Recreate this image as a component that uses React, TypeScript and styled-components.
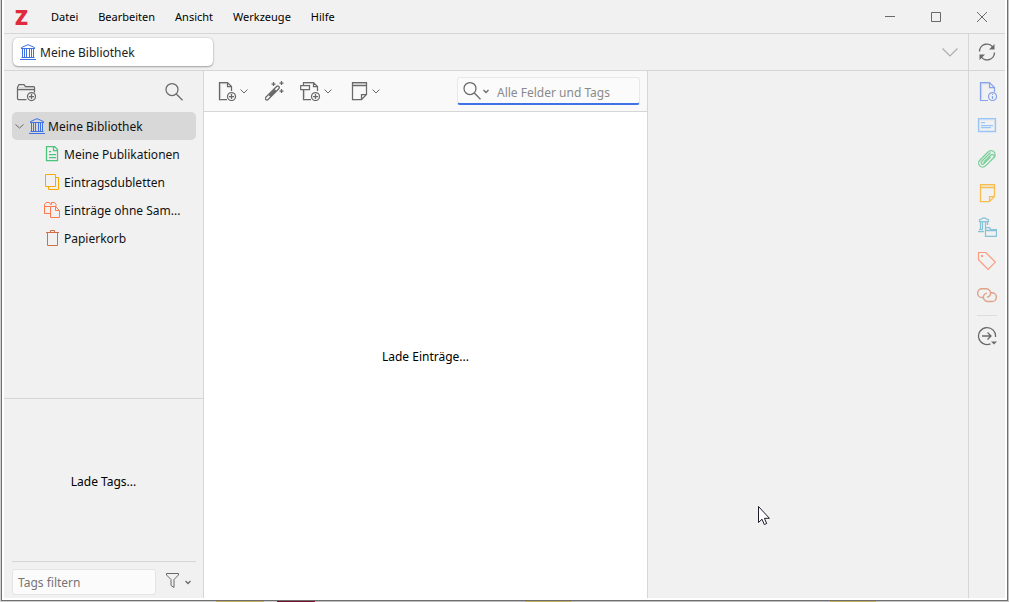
import React from "react";
import styled, { createGlobalStyle } from "styled-components";

const color = {
  chrome: "#f1f1f1",
  toolbar: "#f9f9f9",
  line: "#d6d6d6",
  icon: "#696969",
  accent: "#4072e5",
};

const GlobalStyle = createGlobalStyle`
  *, *::before, *::after { box-sizing: border-box; }
  body {
    margin: 0;
    font-family: "Noto Sans", "Open Sans", sans-serif;
    font-size: 12px;
    line-height: 16px;
    color: #111;
  }
  button, input { font: inherit; color: inherit; }
  svg { display: block; flex: none; }
`;

const Desktop = styled.div`
  min-height: 100vh;
  display: flex;
  padding: 0 1px 1px;
  background: linear-gradient(90deg,
    #cfcfcf 0 216px, #c5ad5e 216px 264px, #cfcfcf 264px 277px, #7a1030 277px 315px,
    #bdbdbd 315px 525px, #c5ad5e 525px 571px, #bdbdbd 571px 830px, #c5ad5e 830px 876px, #c4c4c4 876px);
`;

const Window = styled.div`
  flex: 1;
  min-width: 0;
  display: flex;
  flex-direction: column;
  border: 1px solid #6f6f6f;
  border-top: 0;
  padding: 0 2px 2px;
  background: #fff;
`;

const TitleBar = styled.header`
  display: flex;
  align-items: center;
  height: 34px;
  padding-left: 10px;
  background: ${color.chrome};
  border-bottom: 1px solid ${color.line};
`;

const Logo = styled.span`
  width: 27px;
  padding-left: 1px;
  font-size: 21px;
  font-weight: 900;
  line-height: 32px;
  color: #e02b3c;
`;

const Menu = styled.nav`
  display: flex;
  flex: 1;
`;

const BareButton = styled.button`
  display: flex;
  align-items: center;
  justify-content: center;
  padding: 0;
  border: 0;
  background: none;
  color: ${color.icon};
`;

const MenuItem = styled(BareButton)`
  padding: 4px 10px;
  font-size: 11px;
  color: #000;
`;

const WindowButton = styled(BareButton)`
  width: 46px;
  height: 32px;
`;

const TabBar = styled.div`
  display: flex;
  height: 37px;
  background: ${color.chrome};
  border-bottom: 1px solid ${color.line};
`;

const TabStrip = styled.div`
  flex: 1;
  display: flex;
  align-items: center;
  justify-content: space-between;
  padding: 0 10px 0 9px;
`;

const Tab = styled.button`
  display: flex;
  align-items: center;
  gap: 4px;
  width: 200px;
  height: 28px;
  padding: 0 7px;
  border: 0;
  border-radius: 5px;
  background: #fff;
  box-shadow: 0 0 2px rgba(0, 0, 0, 0.2), 0 1px 2px rgba(0, 0, 0, 0.3);
  color: #222;
`;

const SyncCell = styled.div`
  display: flex;
  align-items: center;
  justify-content: center;
  width: 37px;
  border-left: 1px solid ${color.line};
`;

const Body = styled.div`
  flex: 1;
  display: flex;
  min-height: 0;
  background: ${color.chrome};
`;

const Sidebar = styled.aside`
  display: flex;
  flex-direction: column;
  width: 200px;
  border-right: 1px solid ${color.line};
`;

const SidebarTools = styled.div`
  display: flex;
  align-items: center;
  justify-content: space-between;
  height: 41px;
  padding: 0 19px 0 12px;
`;

const Tree = styled.ul`
  flex: 1;
  margin: 0;
  padding: 0 7px 0 8px;
  list-style: none;
`;

const TreeRow = styled.li<{ $root?: boolean }>`
  display: flex;
  align-items: center;
  gap: ${(p) => (p.$root ? 3 : 2)}px;
  height: 28px;
  padding-left: ${(p) => (p.$root ? 2 : 30)}px;
  border-radius: 5px;
  background: ${(p) => (p.$root ? "#d8d8d8" : "transparent")};
  line-height: 20px;
  white-space: nowrap;
`;

const TreeLabel = styled.span`
  padding-top: 2px;
`;

const TagPanel = styled.section`
  display: flex;
  flex-direction: column;
  height: 200px;
  border-top: 1px solid ${color.line};
`;

const Status = styled.div`
  flex: 1;
  display: flex;
  align-items: center;
  justify-content: center;
  padding-top: 3px;
  color: #000;
`;

const TagFooter = styled.div`
  display: flex;
  align-items: center;
  gap: 8px;
  height: 37px;
  margin: 0 7px 0 8px;
  padding-top: 3px;
  border-top: 1px solid ${color.line};
`;

const TagInput = styled.input`
  width: 144px;
  height: 26px;
  padding: 2px 5px 0;
  border: 1px solid #e4e4e4;
  border-radius: 3px;
  background: #fbfbfb;
  &::placeholder { color: #757575; opacity: 1; }
`;

const ItemsPane = styled.main`
  display: flex;
  flex-direction: column;
  width: 444px;
  border-right: 1px solid ${color.line};
  background: #fff;
`;

const Toolbar = styled.div`
  display: flex;
  align-items: center;
  gap: 16px;
  height: 41px;
  padding: 0 7px 0 13px;
  background: ${color.toolbar};
  border-bottom: 1px solid ${color.line};
`;

const ToolButton = styled(BareButton)`
  gap: 2px;
`;

const SearchBox = styled.div`
  display: flex;
  align-items: center;
  gap: 1px;
  width: 183px;
  height: 28px;
  margin-left: auto;
  padding-left: 4px;
  border: 1px solid #e9e9e9;
  border-bottom: 2px solid ${color.accent};
  border-radius: 3px;
  background: #fbfbfb;
`;

const SearchInput = styled.input`
  flex: 1;
  min-width: 0;
  padding: 4px 0 0 6px;
  border: 0;
  outline: 0;
  background: none;
  &::placeholder { color: #8a8a8a; opacity: 1; }
`;

const ItemPane = styled.section`
  flex: 1;
  min-width: 0;
`;

const Rail = styled.nav`
  display: flex;
  flex-direction: column;
  align-items: center;
  gap: 6px;
  width: 37px;
  padding-top: 6px;
  border-left: 1px solid ${color.line};
`;

const RailButton = styled(BareButton)<{ $tint: string }>`
  width: 28px;
  height: 28px;
  color: ${(p) => p.$tint};
`;

const RailDivider = styled.hr`
  width: 20px;
  height: 1px;
  margin: 0;
  border: 0;
  background: #dcdcdc;
`;

const Pointer = styled.svg`
  position: absolute;
  left: 758px;
  top: 506px;
`;

type IconProps = { w?: number; h?: number; tint?: string; bold?: boolean; children: React.ReactNode };

const Icon = ({ w = 20, h = 20, tint, bold, children }: IconProps) => (
  <svg
    width={w}
    height={h}
    viewBox={`0 0 ${w} ${h}`}
    fill="none"
    stroke="currentColor"
    strokeWidth={bold ? 1.25 : 1}
    color={tint}
    aria-hidden="true"
  >
    {children}
  </svg>
);

const Chevron = () => (
  <Icon w={10} h={20}><path d="M1.500 8.500 5 12l3.500-3.500" /></Icon>
);

const SmallChevron = () => (
  <Icon w={8} h={20} bold><path d="M1.500 9 4 11.500 6.500 9" /></Icon>
);

const Magnifier = () => (
  <Icon bold><circle cx="8" cy="7.500" r="6" /><path d="m12.300 12 6.200 6.200" /></Icon>
);

const LibraryIcon = () => (
  <Icon w={16} h={16} tint={color.accent}>
    <path d="M1.500 5V3.500L8 .7l6.500 2.800V5M1.500 4.500h13M2.500 5v8M4.500 5v8M6.500 5v8M9.500 5v8M11.500 5v8M13.500 5v8M1.500 13.500h13M0 15.500h16" />
  </Icon>
);

const PlusBadge = ({ x, y }: { x: number; y: number }) => (
  <g>
    <circle cx={x} cy={y} r="4" />
    <path d={`M${x - 2.5} ${y}h5M${x} ${y - 2.5}v5`} />
  </g>
);

const NewCollectionIcon = () => (
  <Icon bold>
    <path d="M10.500 17.500h-8a1 1 0 0 1-1-1v-11l1.500-3h5l1.500 2h8a1 1 0 0 1 1 1v5M1.500 7.500h17" />
    <path d="M2.500 6h15" opacity=".25" />
    <PlusBadge x={15.5} y={14.5} />
  </Icon>
);

const NewItemIcon = () => (
  <Icon bold>
    <path d="M10 18.500H2.500v-17h8l4 4V10M10.500 1.500v4h4" />
    <path d="M3.500 17V2.500h6" opacity=".2" />
    <PlusBadge x={14.5} y={15.5} />
  </Icon>
);

const WandIcon = () => (
  <Icon w={19} bold>
    <path d="m.8 16.300 10.800-10.800a1.400 1.400 0 0 1 2.200 2.200L3 18.500a1.500 1.500 0 0 1-2.200-2.200Z" />
    <path d="m4.500 15 6-6" strokeWidth="3" />
    <path d="M8.500 1v4M6.500 3h4M16.500 0v4M14.500 2h4M16.500 8v4M14.500 10h4" />
  </Icon>
);

const AddAttachmentIcon = () => (
  <Icon w={21} bold>
    <path d="M11 18.500H3.500v-10M3.500 4V1.500h10l4 4V10M13.500 1.500v4h4M.7 4.500h8.800v4H.7z" />
    <path d="M4.500 17V9.500M5 2.500h7" opacity=".2" />
    <PlusBadge x={15.5} y={15.5} />
  </Icon>
);

const NoteIcon = () => (
  <Icon bold>
    <path d="M3.500 1.500h14v12l-5 5h-9zM3.500 4.500h14M12.500 18.500v-5h5" />
    <path d="M4 3h13" strokeWidth="2" opacity=".25" />
  </Icon>
);

const SyncIcon = () => (
  <Icon>
    <path d="M2.500 9.500A7.300 7.300 0 0 1 16.500 6.500M17.500 10.500A7.300 7.300 0 0 1 3.500 13.500" strokeWidth="1.400" />
    <path d="M17.500 2v5.500H12zM2.500 18v-5.500H8z" fill="currentColor" stroke="none" />
  </Icon>
);

const railItems: { name: string; tint: string; icon: React.ReactNode }[] = [
  {
    name: "Info",
    tint: "#86a3ec",
    icon: (
      <Icon bold>
        <path d="M11 19.500H3.500v-18h9l5 5V11M12.500 1.500v5h5" />
        <path d="M4.500 18.500v-16h7" opacity=".25" />
        <circle cx="15.500" cy="15.500" r="4" />
        <path d="M15.500 15v3M15.500 13v1" />
      </Icon>
    ),
  },
  {
    name: "Zusammenfassung",
    tint: "#99c5f7",
    icon: (
      <Icon bold>
        <path d="M1.500 3.500h17v13h-17zM4 7.500h4M4 10.500h12M4 12.500h10" />
        <path d="M2 4.500h16M2 15.500h16M2.500 4v12M17.500 4v12" opacity=".25" />
      </Icon>
    ),
  },
  {
    name: "Anhänge",
    tint: "#77cf98",
    icon: (
      <Icon bold>
        <path d="M6.500 13.500 14 6a1.900 1.900 0 0 1 2.700 2.700l-8.200 8.200a4 4 0 0 1-5.700-5.700l8.200-8.200a4 4 0 0 1 6.200.2c1.500 1.700 1 4.200-.3 5.500" />
        <path d="m13.500 3.500-9 9a1.600 1.600 0 0 0 2.300 2.300l6.700-6.700" />
      </Icon>
    ),
  },
  { name: "Notizen", tint: "#f8bd4c", icon: <NoteIcon /> },
  {
    name: "Bibliotheken und Sammlungen",
    tint: "#86c2d8",
    icon: (
      <Icon bold>
        <path d="M2.500 4.500V3L7 .8 11.500 3v1.500zM3.500 5v7M5.500 5v7M8.500 5v5M10.500 5v3M2 12.500h4M1 14.500h6" />
        <path d="M8.500 19.500v-9h4l1.500 2h5.500v7zM8.500 13.500h11" />
        <path d="M9 18.500h10M9 12.500h5" opacity=".3" />
      </Icon>
    ),
  },
  {
    name: "Tags",
    tint: "#fb9b80",
    icon: (
      <Icon>
        <path d="M1.500 1.500h7.200l9.600 9.600-7.200 7.200L1.500 8.700z" strokeWidth="1.200" />
        <path d="M4 5h2" strokeWidth="2" />
      </Icon>
    ),
  },
  {
    name: "Zugehörig",
    tint: "#dfa28a",
    icon: (
      <Icon>
        <path d="M6 12.500H5a4.300 4.300 0 0 1 0-8.700h4.500a4.300 4.300 0 0 1 3.500 6.500 4 4 0 0 1-3 1.900" strokeWidth="1.400" />
        <path d="M14 7.800h1a4.300 4.300 0 0 1 0 8.700h-4.500a4.300 4.300 0 0 1-3.500-6.500 4 4 0 0 1 3-1.900" strokeWidth="1.400" />
      </Icon>
    ),
  },
];

const treeItems: { label: string; icon: React.ReactNode }[] = [
  {
    label: "Meine Publikationen",
    icon: (
      <Icon w={20} h={16} tint="#4cc37b" bold>
        <path d="M4.500.5h8l3 3v11h-11zM11.500.5v4h4M7 5.500h2M7 8.500h7M7 11.500h7" />
      </Icon>
    ),
  },
  {
    label: "Eintragsdubletten",
    icon: (
      <Icon w={20} h={16} tint="#faa700">
        <path d="M3.500.5h10v12h-10zM14 3.500h2.500v12h-10V13" />
      </Icon>
    ),
  },
  {
    label: "Einträge ohne Sam...",
    icon: (
      <Icon w={20} h={16} tint="#ff794c">
        <path d="M8 11.500H2.500V2.500L4 .5h3.500l1 2h1V.5h3l1.500 2v2M2.500 4.500h6M8.500 4.500h5l4 4v7h-9zM13.500 4.500v4h4" />
      </Icon>
    ),
  },
  {
    label: "Papierkorb",
    icon: (
      <Icon w={20} h={16} tint="#d06f46">
        <path d="M4 2.500h13M8.500 2V.5h4V2M5.500 3v12.500h10V3" />
      </Icon>
    ),
  },
];

export default function App() {
  return (
    <Desktop>
      <GlobalStyle />
      <Window>
        <TitleBar>
          <Logo>Z</Logo>
          <Menu>
            {["Datei", "Bearbeiten", "Ansicht", "Werkzeuge", "Hilfe"].map((m) => (
              <MenuItem key={m}>{m}</MenuItem>
            ))}
          </Menu>
          <WindowButton aria-label="Minimieren">
            <Icon w={12} h={12}><path d="M1 5.500h10" /></Icon>
          </WindowButton>
          <WindowButton aria-label="Maximieren">
            <Icon w={12} h={12}><path d="M1.500 1.500h9v9h-9z" /></Icon>
          </WindowButton>
          <WindowButton aria-label="Schließen">
            <Icon w={12} h={12}><path d="m1 1 10 10M11 1 1 11" /></Icon>
          </WindowButton>
        </TitleBar>

        <TabBar>
          <TabStrip>
            <Tab>
              <LibraryIcon />
              <TreeLabel>Meine Bibliothek</TreeLabel>
            </Tab>
            <BareButton aria-label="Alle Tabs">
              <Icon w={16} h={16} tint="#adadad"><path d="m.5 4.500 7.500 7.500 7.500-7.500" strokeWidth="1.200" /></Icon>
            </BareButton>
          </TabStrip>
          <SyncCell>
            <BareButton aria-label="Synchronisieren"><SyncIcon /></BareButton>
          </SyncCell>
        </TabBar>

        <Body>
          <Sidebar>
            <SidebarTools>
              <BareButton aria-label="Neue Sammlung"><NewCollectionIcon /></BareButton>
              <BareButton aria-label="Sammlungen filtern"><Magnifier /></BareButton>
            </SidebarTools>
            <Tree>
              <TreeRow $root>
                <Icon w={12} h={16} tint={color.icon}><path d="M1.500 6.500 5.500 10l4-3.500" /></Icon>
                <LibraryIcon />
                <TreeLabel>Meine Bibliothek</TreeLabel>
              </TreeRow>
              {treeItems.map((t) => (
                <TreeRow key={t.label}>
                  {t.icon}
                  <TreeLabel>{t.label}</TreeLabel>
                </TreeRow>
              ))}
            </Tree>
            <TagPanel>
              <Status>Lade Tags...</Status>
              <TagFooter>
                <TagInput aria-label="Tags filtern" placeholder="Tags filtern" />
                <BareButton aria-label="Tag-Optionen">
                  <Icon w={20} h={20}>
                    <path d="M2.500 1.500h12V3L10 7.500v8l-3-2v-6L2.500 3z" />
                  </Icon>
                  <SmallChevron />
                </BareButton>
              </TagFooter>
            </TagPanel>
          </Sidebar>

          <ItemsPane>
            <Toolbar>
              <ToolButton aria-label="Neuer Eintrag"><NewItemIcon /><Chevron /></ToolButton>
              <ToolButton aria-label="Eintrag per Kennung hinzufügen"><WandIcon /></ToolButton>
              <ToolButton aria-label="Anhang hinzufügen"><AddAttachmentIcon /><Chevron /></ToolButton>
              <ToolButton aria-label="Neue Notiz"><NoteIcon /><Chevron /></ToolButton>
              <SearchBox>
                <BareButton aria-label="Suchmodus"><Magnifier /><SmallChevron /></BareButton>
                <SearchInput aria-label="Suche" placeholder="Alle Felder und Tags" />
              </SearchBox>
            </Toolbar>
            <Status>Lade Einträge...</Status>
          </ItemsPane>

          <ItemPane />

          <Rail>
            {railItems.map((r) => (
              <RailButton key={r.name} $tint={r.tint} aria-label={r.name}>{r.icon}</RailButton>
            ))}
            <RailDivider />
            <RailButton $tint={color.icon} aria-label="Finden">
              <Icon>
                <path d="M13.500 17.800A8.500 8.500 0 1 1 18.500 11M5 10h9M10.500 6.500 14 10l-3.500 3.500" strokeWidth="1.300" />
                <path d="M14 15.500h6l-3 3z" fill="currentColor" stroke="none" />
              </Icon>
            </RailButton>
          </Rail>
        </Body>
      </Window>
      <Pointer width="13" height="20" viewBox="0 0 13 20" fill="#fff" stroke="#1c1c2c" aria-hidden="true">
        <path d="M.5.500v16l3.500-3.300 2.300 5.300 2.400-1-2.300-5.200h5z" />
      </Pointer>
    </Desktop>
  );
}
